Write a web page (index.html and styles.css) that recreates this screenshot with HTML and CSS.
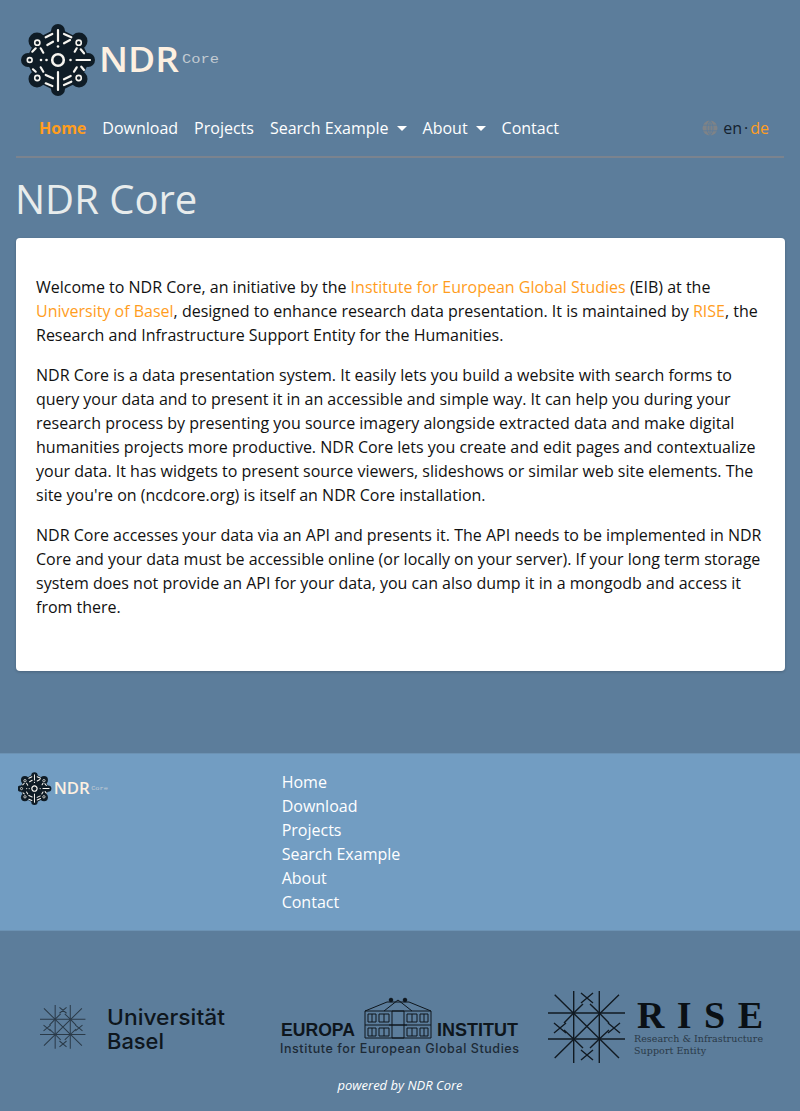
FILE: index.html
```html
<!DOCTYPE html>
<html lang="en">
<head>
<meta charset="utf-8">
<title>NDR Core</title>
<link rel="stylesheet" href="styles.css">
</head>
<body>
<svg class="defs" width="0" height="0" aria-hidden="true">
  <defs>
    <g id="emblem">
      <path class="em-body" d="M0 -30 20 -20 30 0 20 20 0 30 -20 20 -30 0 -20 -20Z"/>
      <circle class="em-knob" cx="0" cy="-29" r="7"/>
      <circle class="em-knob" cx="0" cy="29" r="7"/>
      <circle class="em-knob" cx="-30" cy="0" r="7"/>
      <circle class="em-knob" cx="30" cy="0" r="7"/>
      <circle class="em-knob" cx="21" cy="-19" r="8.5"/>
      <circle class="em-knob" cx="-21" cy="-19" r="8.5"/>
      <circle class="em-knob" cx="21" cy="19" r="8.5"/>
      <circle class="em-knob" cx="-21" cy="19" r="8.5"/>
      <path class="em-line" d="M-12.3 -22.7-5.7 -26M-10.7 -15-5 -18.3M6 -26 13.3 -22.7M6 -16.7 12 -20"/>
      <path class="em-line" d="M-25.7 -8.3-22.3 -11.7M-17.3 -11.7-14.7 -7.3M-17.3 7.3-14.7 11.7M-25 9.3-22.3 11.7"/>
      <path class="em-line" d="M16.7 -8.3 18.7 -11.7M22.7 -10.7 26 -6.7M16 11.7 18.7 7.3M23.3 6.7 26 10"/>
      <path class="em-line" d="M-12.3 23.3-5.7 26M-12.3 15-5 18.3M6 25 13.3 21.7M6 19.3 12.7 16"/>
      <circle class="em-ring" cx="-20.7" cy="-17.3" r="2.6"/>
      <circle class="em-ring" cx="20.7" cy="-17.3" r="2.6"/>
      <circle class="em-ring" cx="-20.7" cy="18" r="2.6"/>
      <circle class="em-ring" cx="20.7" cy="18" r="2.6"/>
      <circle class="em-ring" cx="-28.3" cy="0" r="2.4"/>
      <circle class="em-core" r="5.8"/>
      <path class="em-line" d="M0 -30V-19M0 12V30M18.5 0H32"/>
      <circle class="em-dot" cx="0" cy="-13.5" r="1.3"/>
      <circle class="em-dot" cx="12.5" cy="0" r="1.3"/>
      <circle class="em-dot" cx="-11.5" cy="0" r="1.3"/>
      <circle class="em-dot" cx="-17" cy="0" r="1.3"/>
    </g>
    <g id="lattice">
      <path d="M0 24H77M0 50H77M25.7 0V74M51.3 0V74"/>
      <path d="M6.7 5.7 71 69M71 5.7 6.7 69"/>
      <path d="M25.7 24 35 15M25.7 24 16 34M51.3 24 42 15M51.3 24 61 34M25.7 50 35 59M25.7 50 16 41M51.3 50 42 59M51.3 50 61 41"/>
      <path d="M33 4 45 14M45 4 33 14M33 61 45 71M45 61 33 71M6 34 18 44M18 34 6 44M60 34 72 44M72 34 60 44"/>
    </g>
  </defs>
</svg>

<header class="site-header">
  <a class="brand" href="#">
    <svg class="brand-logo" width="210" height="80" viewBox="0 0 210 80">
      <use href="#emblem" transform="translate(42 40)"/>
      <text class="logo-ndr" x="83" y="52" textLength="80" lengthAdjust="spacingAndGlyphs">NDR</text>
      <text class="logo-core" x="166" y="43" textLength="37" lengthAdjust="spacingAndGlyphs">Core</text>
    </svg>
  </a>
  <nav class="navbar">
    <ul class="nav-list">
      <li><a class="nav-link active" href="#">Home</a></li>
      <li><a class="nav-link" href="#">Download</a></li>
      <li><a class="nav-link" href="#">Projects</a></li>
      <li><a class="nav-link caret" href="#">Search Example</a></li>
      <li><a class="nav-link caret" href="#">About</a></li>
      <li><a class="nav-link" href="#">Contact</a></li>
    </ul>
    <div class="lang">
      <svg class="globe" width="16" height="16" viewBox="0 0 16 16">
        <circle cx="8" cy="8" r="7.5"/>
        <path class="globe-lines" d="M0.5 5.2H15.5M0.5 10.8H15.5M8 0.5V15.5M8 0.5C4 4 4 12 8 15.5M8 0.5C12 4 12 12 8 15.5"/>
      </svg>
      <a class="lang-en" href="#">en</a><span class="lang-sep">·</span><a class="lang-de" href="#">de</a>
    </div>
  </nav>
</header>

<main class="main">
  <h1 class="title">NDR Core</h1>
  <section class="card">
    <p>Welcome to NDR Core, an initiative by the <a href="#">Institute for European Global Studies</a> (EIB) at the <a href="#">University of Basel</a>, designed to enhance research data presentation. It is maintained by <a href="#">RISE</a>, the Research and Infrastructure Support Entity for the Humanities.</p>
    <p>NDR Core is a data presentation system. It easily lets you build a website with search forms to query your data and to present it in an accessible and simple way. It can help you during your research process by presenting you source imagery alongside extracted data and make digital humanities projects more productive. NDR Core lets you create and edit pages and contextualize your data. It has widgets to present source viewers, slideshows or similar web site elements. The site you're on (ncdcore.org) is itself an NDR Core installation.</p>
    <p>NDR Core accesses your data via an API and presents it. The API needs to be implemented in NDR Core and your data must be accessible online (or locally on your server). If your long term storage system does not provide an API for your data, you can also dump it in a mongodb and access it from there.</p>
  </section>
</main>

<section class="footer-nav">
  <a class="footer-brand" href="#">
    <svg width="96" height="35" viewBox="0 0 210 76">
      <use href="#emblem" transform="translate(36 36)"/>
      <text class="logo-ndr" x="78" y="48" textLength="79" lengthAdjust="spacingAndGlyphs">NDR</text>
      <text class="logo-core" x="160" y="39" textLength="37" lengthAdjust="spacingAndGlyphs">Core</text>
    </svg>
  </a>
  <ul class="footer-links">
    <li><a href="#">Home</a></li>
    <li><a href="#">Download</a></li>
    <li><a href="#">Projects</a></li>
    <li><a href="#">Search Example</a></li>
    <li><a href="#">About</a></li>
    <li><a href="#">Contact</a></li>
  </ul>
</section>

<footer class="partners">
  <div class="partner-logos">
    <svg class="partner" width="188" height="76" viewBox="0 0 188 76">
      <use class="lat-basel" href="#lattice" transform="translate(1 14) scale(.59)"/>
      <text class="basel-text" x="68" y="33.7" textLength="118" lengthAdjust="spacingAndGlyphs">Universität</text>
      <text class="basel-text" x="68" y="57.7" textLength="57" lengthAdjust="spacingAndGlyphs">Basel</text>
    </svg>
    <svg class="partner" width="240" height="76" viewBox="0 0 240 76">
      <text class="eu-big" x="1" y="45" textLength="74" lengthAdjust="spacingAndGlyphs">EUROPA</text>
      <text class="eu-big" x="157" y="45" textLength="81" lengthAdjust="spacingAndGlyphs">INSTITUT</text>
      <text class="eu-sub" x="0" y="62" textLength="239">Institute for European Global Studies</text>
      <g class="eu-house" transform="translate(0 -2)">
        <path d="M85 22 107 13H129L151 22M85 22H151V49H85ZM104 22 118 11 132 22M85 36H151"/>
        <path d="M112 22H124V49H112ZM109 36H127"/>
        <path d="M88 25H96V33H88ZM99 25H109V33H99ZM127 25H137V33H127ZM140 25H148V33H140ZM88 39H96V47H88ZM99 39H109V47H99ZM127 39H137V47H127ZM140 39H148V47H140ZM92 25V33M104 25V33M132 25V33M144 25V33M92 39V47M104 39V47M132 39V47M144 39V47"/>
        <circle class="eu-fill" cx="111" cy="11" r="1.8"/>
        <circle class="eu-fill" cx="125" cy="11" r="1.8"/>
      </g>
    </svg>
    <svg class="partner" width="238" height="76" viewBox="0 0 238 76">
      <use class="lat-rise" href="#lattice" transform="translate(0 -2)"/>
      <text class="rise-big" x="89" y="36.7" textLength="126">R I S E</text>
      <text class="rise-sub" x="86" y="50.7" textLength="129">Research &amp; Infrastructure</text>
      <text class="rise-sub" x="86" y="62.5" textLength="72">Support Entity</text>
    </svg>
  </div>
  <p class="powered">powered by NDR Core</p>
</footer>
</body>
</html>
```

FILE: styles.css
```css
* { box-sizing: border-box; }

html, body { margin: 0; padding: 0; }

body {
  background: #5c7d9b;
  color: #111;
  font-family: "Open Sans", sans-serif;
  font-size: 16px;
  line-height: 24px;
}

a { text-decoration: none; }
ul { list-style: none; margin: 0; padding: 0; }

.defs { position: absolute; }

.site-header { padding: 20px 16px 0; }

.brand { display: block; height: 80px; }
.brand-logo { display: block; }

.logo-ndr {
  fill: #fdf0e1;
  font-family: "Open Sans", sans-serif;
  font-size: 35px;
  font-weight: 600;
}
.logo-core {
  fill: #c3cbd2;
  font-family: "Liberation Mono", monospace;
  font-size: 13px;
}

.em-body { fill: #0f1c26; stroke: #0f1c26; stroke-width: 4; stroke-linejoin: round; }
.em-knob { fill: #0f1c26; }
.em-line { fill: none; stroke: #f7f5f0; stroke-width: 2.2; stroke-linecap: round; }
.em-ring { fill: none; stroke: #f7f5f0; stroke-width: 1.6; }
.em-core { fill: none; stroke: #f7f5f0; stroke-width: 2.6; }
.em-dot { fill: #f7f5f0; }

.navbar {
  display: flex;
  align-items: center;
  justify-content: space-between;
  padding: 8px 15px;
  border-bottom: 2px solid #7b838e;
}

.nav-list { display: flex; }

.nav-link {
  display: block;
  padding: 8px;
  color: #fff;
  line-height: 24px;
}
.nav-link.active { color: #ff9d1e; font-weight: 700; }
.nav-link.caret::after {
  content: "";
  display: inline-block;
  margin-left: 8px;
  vertical-align: 3px;
  border-top: 5px solid #fff;
  border-left: 5px solid transparent;
  border-right: 5px solid transparent;
}

.lang { display: flex; align-items: center; }
.globe { margin-right: 5px; }
.globe circle { fill: #7f8387; }
.globe-lines { fill: none; stroke: #5c7d9b; stroke-width: .9; }
.lang-en { color: #14222f; }
.lang-sep { color: #14222f; margin: 0 2px; }
.lang-de { color: #ff9d1e; }

.main { padding: 0 15px 82px 16px; }

.title {
  margin: 17px 0 15px -1px;
  color: #e8ecec;
  font-size: 40px;
  font-weight: 400;
  line-height: 48px;
}

.card {
  padding: 37px 20px 36px;
  background: #fff;
  border-radius: 4px;
  box-shadow: 0 1px 3px rgba(0, 0, 0, .2);
}
.card p { margin: 0 0 16px; }
.card a { color: #ff9d1e; }

.footer-nav {
  display: grid;
  grid-template-columns: 266.67px 1fr;
  padding: 16px 16px 16px 0;
  background: #729dc2;
  border-top: 1px solid #6c92b3;
}
.footer-brand { display: block; padding: 2px 0 0 18px; }
.footer-brand svg { display: block; }
.footer-links { padding-left: 15px; }
.footer-links a { color: #fff; }

.partners { padding: 60px 0 16px; border-top: 1px solid #6c92b3; }

.partner-logos {
  display: grid;
  grid-template-columns: repeat(3, 1fr);
  justify-items: center;
  align-items: center;
}
.partner { display: block; }

.lat-basel { fill: none; stroke: #2a3a48; stroke-width: 1.7; }
.lat-rise { fill: none; stroke: #111a22; stroke-width: 1.4; }

.basel-text {
  fill: #0e161d;
  font-family: "Inter", sans-serif;
  font-size: 22px;
  font-weight: 500;
}

.eu-big {
  fill: #0e161d;
  font-family: "Liberation Sans", sans-serif;
  font-size: 17.5px;
  font-weight: 700;
}
.eu-sub {
  fill: #1d2a36;
  font-family: "Inter", sans-serif;
  font-size: 12.5px;
  font-weight: 500;
}
.eu-house { fill: none; stroke: #0e161d; stroke-width: 1; }
.eu-fill { fill: #0e161d; }

.rise-big {
  fill: #0a1015;
  font-family: "Liberation Serif", serif;
  font-size: 38px;
  font-weight: 700;
}
.rise-sub {
  fill: #2a3947;
  font-family: "DejaVu Serif", serif;
  font-size: 9.5px;
}

.powered {
  margin: 8px 0 0;
  color: #fff;
  font-size: 13px;
  font-style: italic;
  line-height: 20px;
  text-align: center;
}
```
